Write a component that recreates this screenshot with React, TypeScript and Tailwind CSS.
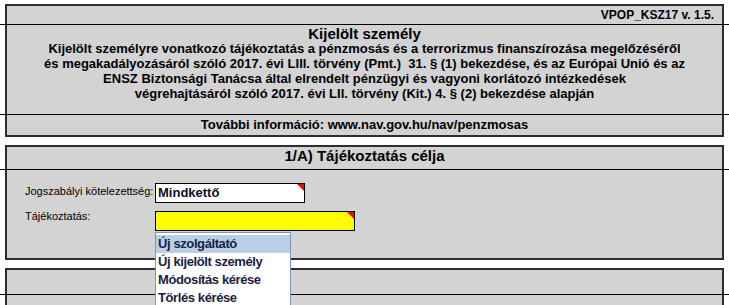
const font = { fontFamily: '"Liberation Sans", Arial, sans-serif' };

function Rule() {
  // spreadsheet grid line that runs past the box border
  return <div className="h-px bg-black -mx-[7px] shrink-0" />;
}

function Corner() {
  return (
    <span className="absolute top-0 right-0 w-0 h-0 border-t-[7px] border-l-[7px] border-t-[#ff0000] border-l-transparent" />
  );
}

const options = ['Új szolgáltató', 'Új kijelölt személy', 'Módosítás kérése', 'Törlés kérése'];

export default function App() {
  return (
    <div className="w-[729px] h-[305px] overflow-hidden bg-white pt-[4px] text-black" style={font}>
      {/* Header box */}
      <div className="ml-[5px] w-[719px] border-2 border-[#2e2e2e] bg-[#d3d3d3] flex flex-col">
        <div className="h-[18px] flex items-center justify-end pr-[8px] text-[12px] font-bold">
          VPOP_KSZ17 v. 1.5.
        </div>
        <Rule />
        <div className="h-[89px] flex flex-col items-center text-center">
          <div className="text-[15px] font-bold leading-[15px] pt-[1px]">Kijelölt személy</div>
          <div className="text-[13px] font-bold leading-[15px] whitespace-nowrap">
            Kijelölt személyre vonatkozó tájékoztatás a pénzmosás és a terrorizmus finanszírozása megelőzéséről
            <br />
            és megakadályozásáról szóló 2017. évi LIII. törvény (Pmt.)&nbsp; 31. § (1) bekezdése, és az Európai Unió és az
            <br />
            ENSZ Biztonsági Tanácsa által elrendelt pénzügyi és vagyoni korlátozó intézkedések
            <br />
            végrehajtásáról szóló 2017. évi LII. törvény (Kit.) 4. § (2) bekezdése alapján
          </div>
        </div>
        <Rule />
        <div className="h-[20px] flex items-center justify-center text-[13px] font-bold">
          További információ: www.nav.gov.hu/nav/penzmosas
        </div>
      </div>

      {/* 1/A section */}
      <div className="relative mt-[8px] ml-[5px] w-[719px] border-2 border-[#2e2e2e] bg-[#d3d3d3] flex flex-col">
        <div className="h-[22px] flex justify-center pt-[1px] text-[15px] font-bold leading-[16px]">
          1/A) Tájékoztatás célja
        </div>
        <Rule />
        <div className="h-[88px] flex flex-col pt-[13px] pl-[18px]">
          <div className="flex items-start">
            <span className="w-[130px] text-[11px] leading-[14px] pt-[1px]">Jogszabályi kötelezettség:</span>
            <div className="relative w-[150px] h-[20px] bg-white border border-black flex items-center pl-[2px] text-[13px] font-bold text-[#0d0d26]">
              Mindkettő
              <Corner />
            </div>
          </div>
          <div className="flex items-start mt-[8px]">
            <span className="w-[130px] text-[11px] leading-[14px] -mt-[2px]">Tájékoztatás:</span>
            <div className="relative w-[200px] h-[20px] bg-[#ffff00] border border-black">
              <Corner />
            </div>
          </div>
        </div>

        {/* open dropdown list */}
        <div className="absolute z-10 left-[148px] top-[85px] w-[136px] h-[80px] bg-white border border-[#7f93b5] pt-[2px] text-[13px] tracking-[-0.4px] font-bold text-[#1a2240]">
          {options.map((o, i) => (
            <div
              key={o}
              className={`h-[18px] leading-[18px] pl-[2px] whitespace-nowrap ${i === 0 ? 'bg-[#b8cfe5]' : ''}`}
            >
              {o}
            </div>
          ))}
        </div>
      </div>

      {/* next section (cut off) */}
      <div className="mt-[8px] ml-[5px] w-[719px] border-2 border-b-0 border-[#2e2e2e] bg-[#d3d3d3] flex flex-col">
        <div className="h-[24px]" />
        <Rule />
        <div className="h-[20px]" />
      </div>
    </div>
  );
}
